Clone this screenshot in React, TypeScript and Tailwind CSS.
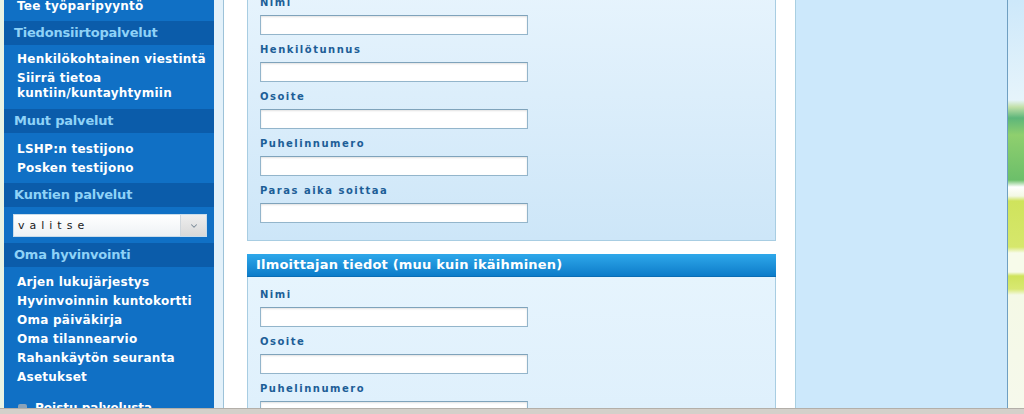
import { ChevronDown } from "lucide-react"

const font = "font-['DejaVu_Sans','Liberation_Sans',sans-serif]"

function SideItem({ children }: { children: React.ReactNode }) {
  return (
    <div className="py-[2px] pl-[13px] pr-[6px] text-[12px] leading-[15px] font-bold tracking-[0.25px] text-white">
      {children}
    </div>
  )
}

function SideHeader({ children }: { children: React.ReactNode }) {
  return (
    <div className="h-[24px] bg-[#0b5caa] pl-[10px] text-[13px] leading-[24px] font-bold tracking-[-0.2px] text-[#8fd2f7]">
      {children}
    </div>
  )
}

function Field({ label }: { label: string }) {
  return (
    <div className="mb-[7px]">
      <div className="h-[16px] text-[10px] leading-[16px] font-bold tracking-[1.5px] text-[#1d5e97]">{label}</div>
      <div className="mt-[4px] h-[20px] w-[268px] border border-[#93b5cb] border-t-[#7fa3bb] bg-white shadow-[inset_0_1px_2px_rgba(0,0,0,0.12)]" />
    </div>
  )
}

export default function App() {
  return (
    <div className={`w-[1024px] h-[414px] overflow-hidden flex flex-col bg-white ${font}`}>
      <div className="flex h-[408px] overflow-hidden">
        {/* left edge of page background */}
        <div className="w-[4px] bg-[#e9f3e4]" />

        {/* Sidebar */}
        <aside className="w-[210px] bg-[#1070c5] flex flex-col">
          <div className="-mt-[3px] pb-[5px]">
            <SideItem>Tee työparipyyntö</SideItem>
          </div>

          <SideHeader>Tiedonsiirtopalvelut</SideHeader>
          <div className="pt-[5px] pb-[6px]">
            <SideItem>Henkilökohtainen viestintä</SideItem>
            <SideItem>
              Siirrä tietoa
              <br />
              kuntiin/kuntayhtymiin
            </SideItem>
          </div>

          <SideHeader>Muut palvelut</SideHeader>
          <div className="pt-[7px] pb-[5px]">
            <SideItem>LSHP:n testijono</SideItem>
            <SideItem>Posken testijono</SideItem>
          </div>

          <SideHeader>Kuntien palvelut</SideHeader>
          <div className="pt-[7px] pb-[6px] pl-[9px]">
            <div className="flex h-[23px] w-[194px] border border-[#c9dcea] bg-gradient-to-b from-white to-[#eef2f5]">
              <div className="flex-1 pl-[4px] text-[11px] leading-[21px] tracking-[5px] text-[#1a1a1a]">valitse</div>
              <div className="w-[26px] flex items-center justify-center border-l border-[#cfd6dc] bg-gradient-to-b from-[#eeeeee] to-[#d9d9d9]">
                <ChevronDown className="w-[10px] h-[10px] text-[#7a8a98]" strokeWidth={2.5} />
              </div>
            </div>
          </div>

          <SideHeader>Oma hyvinvointi</SideHeader>
          <div className="pt-[6px] pb-[6px]">
            <SideItem>Arjen lukujärjestys</SideItem>
            <SideItem>Hyvinvoinnin kuntokortti</SideItem>
            <SideItem>Oma päiväkirja</SideItem>
            <SideItem>Oma tilannearvio</SideItem>
            <SideItem>Rahankäytön seuranta</SideItem>
            <SideItem>Asetukset</SideItem>
          </div>
          <div className="mx-[9px] h-px bg-[#3185cf]" />
          <div className="flex items-center gap-[8px] pt-[8px] pl-[14px] text-[12px] leading-[15px] font-bold text-white">
            <span className="w-[9px] h-[9px] rounded-[2px] bg-[#8aa2b8]" />
            <span>Poistu palvelusta</span>
          </div>
        </aside>

        <div className="w-[10px] bg-[#e3f1fa] border-r border-[#9cc2d9]" />

        {/* Main content */}
        <main className="w-[571px] bg-white pl-[23px] pr-[19px]">
          <div className="-mt-[13px] border border-[#a8cde2] bg-gradient-to-b from-[#e7f4fd] to-[#cde6f8] pt-[7px] pb-[10px] pl-[12px]">
            <Field label="Nimi" />
            <Field label="Henkilötunnus" />
            <Field label="Osoite" />
            <Field label="Puhelinnumero" />
            <Field label="Paras aika soittaa" />
          </div>

          <div className="mt-[13px]">
            <div className="h-[23px] bg-gradient-to-b from-[#2ea8ea] to-[#0b7cc9] border-b border-[#0a6db4] pl-[9px] text-[13px] leading-[22px] font-bold tracking-[0.2px] text-white">
              Ilmoittajan tiedot (muu kuin ikäihminen)
            </div>
            <div className="border-x border-b border-[#a8cde2] bg-gradient-to-b from-[#e6f4fd] to-[#ddeffc] pt-[10px] pl-[12px] pb-[10px]">
              <Field label="Nimi" />
              <Field label="Osoite" />
              <Field label="Puhelinnumero" />
            </div>
          </div>
        </main>

        {/* Right column */}
        <div className="w-[213px] border-l border-[#a9cfe1] border-r border-r-[#6f9fc2] bg-[#cce8fb]" />

        {/* page background image edge */}
        <div className="w-[16px] bg-[linear-gradient(to_bottom,#cde8fa_0px,#e6f4fb_100px,#c2e0a8_107px,#5db67a_118px,#8fcf6e_135px,#6cbf6a_180px,#ffffff_187px,#f3f8e4_196px,#cfe35c_201px,#d6e76c_247px,#f7fbea_253px,#f7fbea_272px,#cfe35c_276px,#d8e872_289px,#f4f9e6_295px,#f6f9ec_414px)]" />
      </div>
      <div className="h-[6px] bg-[#d4d0ca] border-t border-[#b3afa9]" />
    </div>
  )
}
